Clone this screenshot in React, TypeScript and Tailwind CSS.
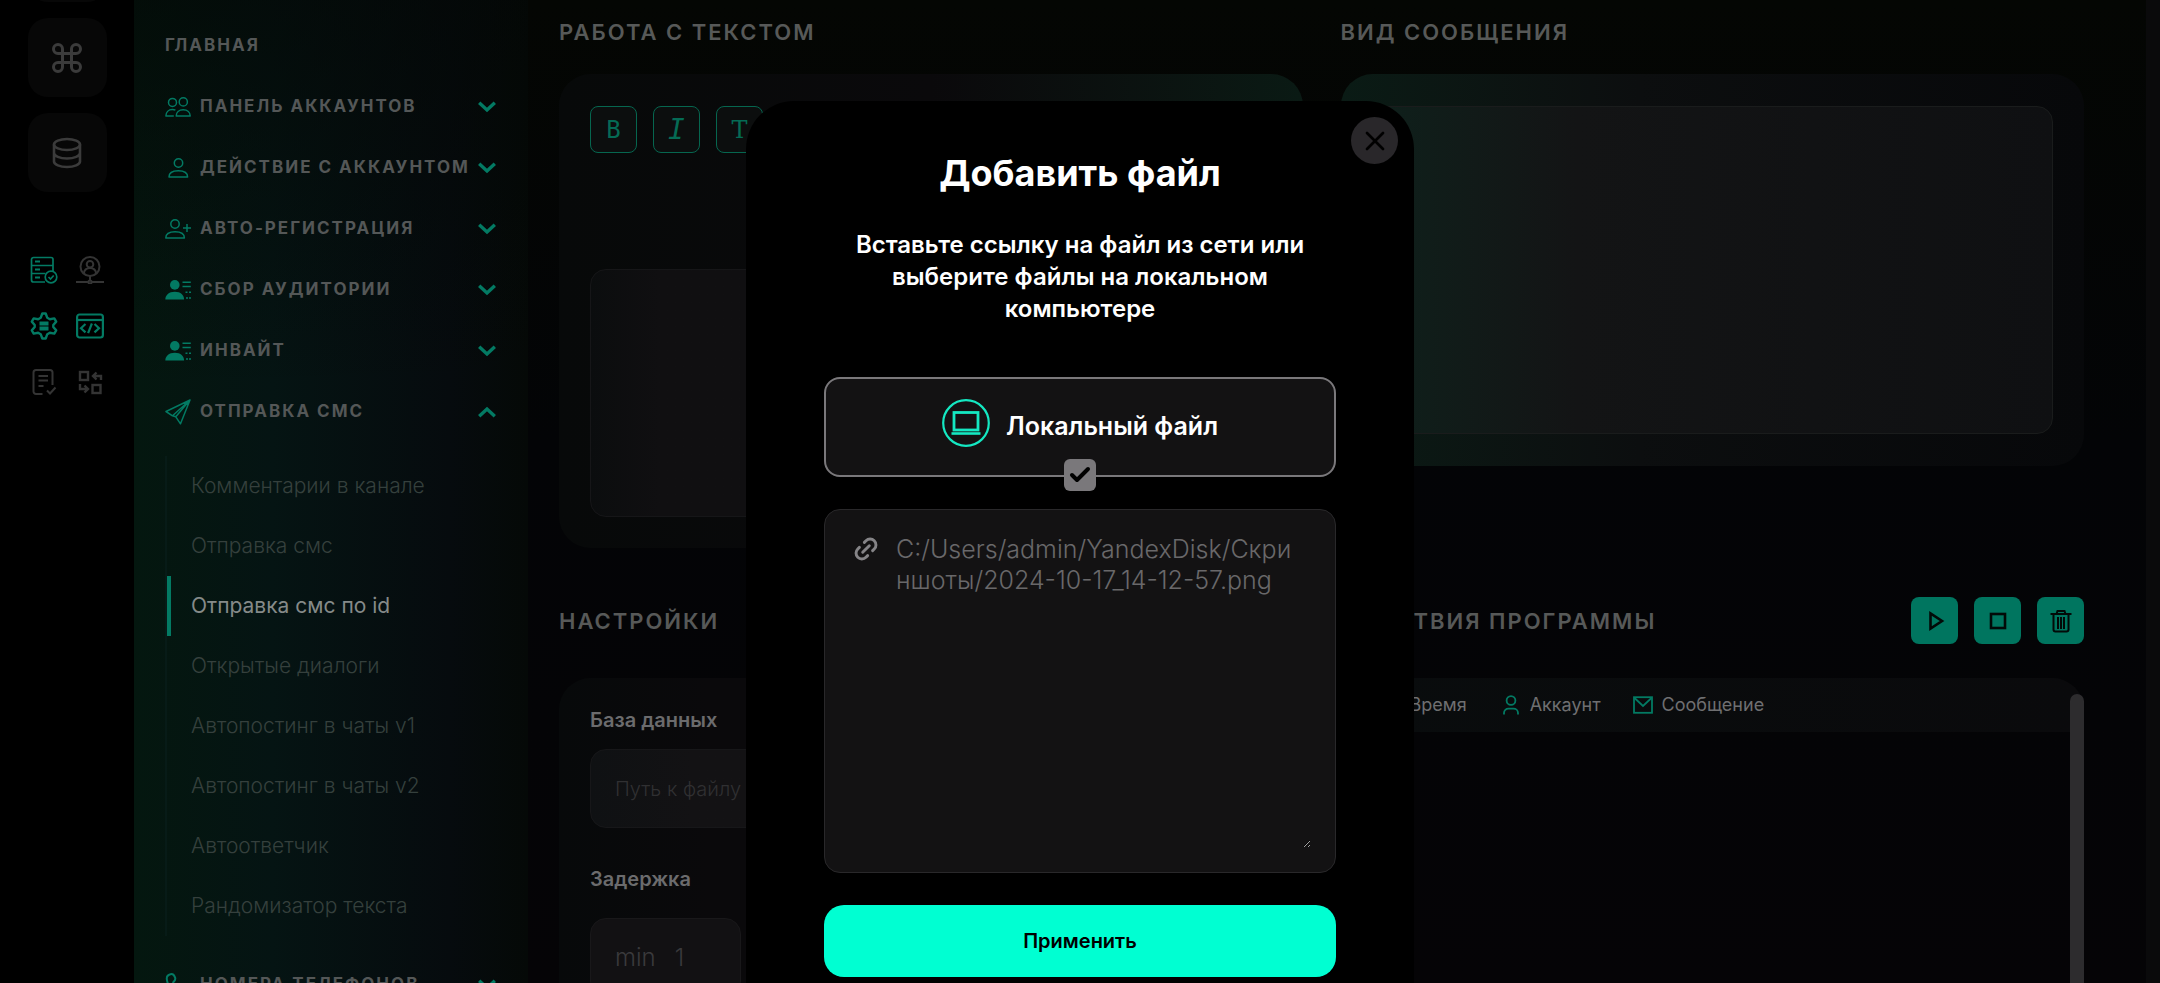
import React from 'react';
import { Command, Link2, X, Check } from 'lucide-react';

const TEAL = '#037a63';

interface IconProps {
  className?: string;
}

/* ---------- icons ---------- */

function UsersIcon({ className }: IconProps) {
  return (
    <svg viewBox="0 0 26 20" className={className} fill="none" stroke="currentColor" strokeWidth="1.5" strokeLinejoin="round">
      <circle cx="7.5" cy="5.4" r="4" />
      <circle cx="18.300" cy="4.900" r="4.100" />
      <path d="M8.800 19H.9c0-3.600 2.500-6.400 6.500-6.400 1.200 0 2.200.2 3 .6M11.200 19c0-3.700 2.800-6.300 7-6.300s7 2.600 7 6.300z" />
    </svg>
  );
}

function UserIcon({ className }: IconProps) {
  return (
    <svg viewBox="0 0 26 20" className={className} fill="none" stroke="currentColor" strokeWidth="1.5" strokeLinejoin="round">
      <circle cx="13.500" cy="5" r="4.200" />
      <path d="M4 19c0-3.700 3.300-6.300 9.300-6.300s9.300 2.600 9.300 6.300z" />
    </svg>
  );
}

function UserPlusIcon({ className }: IconProps) {
  return (
    <svg viewBox="0 0 26 20" className={className} fill="none" stroke="currentColor" strokeWidth="1.5" strokeLinejoin="round">
      <circle cx="10" cy="5" r="4.200" />
      <path d="M.8 19c0-3.700 3.300-6.300 9.300-6.300S19.400 15.300 19.400 19zM18 9h8M22 5v8" />
    </svg>
  );
}

function UserListIcon({ className }: IconProps) {
  return (
    <svg viewBox="0 0 26 20" className={className}>
      <circle cx="9.800" cy="4.900" r="4.800" fill="currentColor" />
      <path d="M.3 19.600c0-4.300 3.500-7.800 9.500-7.800s9.300 3.500 9.300 7.800z" fill="currentColor" />
      <path d="M17.500 2.200h8.300M17.500 6.500h8.300M20.500 12.300h2M24 12.300h2M21 18h2M24 18h2" stroke="currentColor" strokeWidth="1.400" />
    </svg>
  );
}

function PlaneIcon({ className }: IconProps) {
  return (
    <svg viewBox="0 0 26 26" className={className} fill="none" stroke="currentColor" strokeWidth="1.500" strokeLinejoin="round">
      <path d="M25 1 1 12.500l6.500 4.300zM25 1 10.800 17.800l4.700 7zM7.500 16.800l3.300 1" />
    </svg>
  );
}

function PhoneIcon({ className }: IconProps) {
  return (
    <svg viewBox="0 0 26 24" className={className} fill="none" stroke="currentColor" strokeWidth="2" strokeLinejoin="round">
      <path d="M5.500 1.200c2.300-.6 3.800 1 4.600 3.400.5 1.700.2 2.800-1.300 4-.8.7-.9 1.400-.4 2.400 1.300 2.600 3 4.400 5.400 5.800 1 .6 1.700.5 2.500-.3 1.100-1.200 2.300-1.500 3.900-.8 3 1.300 3.900 3 2.300 5.300-1.800 2.400-5 2.400-8.500.8C7.500 18.800 2.400 12.500 1.800 6c-.2-2.300 1.200-4.200 3.700-4.800z" />
    </svg>
  );
}

function Chevron({ up }: { up?: boolean }) {
  return (
    <svg viewBox="0 0 18 12" className={up ? 'w-[18px] shrink-0 rotate-180' : 'w-[18px] shrink-0'} fill="none" stroke={TEAL} strokeWidth="3.400">
      <path d="M1.200 1.800 9 9l7.800-7.200" />
    </svg>
  );
}

function DatabaseIcon() {
  return (
    <svg viewBox="0 0 30 32" className="h-8 w-[30px]" fill="none" stroke="currentColor" strokeWidth="2.600">
      <ellipse cx="15" cy="7.500" rx="13" ry="5.500" />
      <path d="M2 7.500v17c0 3 5.800 5.500 13 5.500s13-2.500 13-5.500v-17M2 16c0 3 5.800 5.500 13 5.500s13-2.500 13-5.500" />
    </svg>
  );
}

function ServerCheckIcon() {
  return (
    <svg viewBox="0 0 28 28" className="size-7" fill="none" stroke="currentColor" strokeWidth="1.700">
      <path d="M15 26H3.500A2 2 0 0 1 1.500 24V3.500a2 2 0 0 1 2-2H21a2 2 0 0 1 2 2V15M1.500 9.500H23M1.500 17.500h14" />
      <path d="M5 5.500h5M5 13.500h5M5 21.500h5" strokeWidth="2" />
      <circle cx="21" cy="21" r="5.800" />
      <path d="m18.500 21 2 2 3.200-3.500" />
    </svg>
  );
}

function UserNetworkIcon() {
  return (
    <svg viewBox="0 0 28 28" className="size-7" fill="none" stroke="currentColor" strokeWidth="2">
      <circle cx="14" cy="10.500" r="9.500" />
      <circle cx="14" cy="8.200" r="3.300" />
      <path d="M7.800 17.500c.5-3.500 2.700-5.500 6.200-5.500s5.700 2 6.200 5.500M14 20v4M0 26h12M16 26h12" />
      <circle cx="14" cy="26" r="1.600" />
    </svg>
  );
}

function GearIcon() {
  return (
    <svg viewBox="0 0 28 28" className="size-7" fill="none" stroke="currentColor" strokeWidth="2.400" strokeLinejoin="round">
      <path d="M12.300 1.500h3.400l1.600 4.300 2.500 1.400 4.500-.8 1.900 3.200-2.900 3.400v2l2.900 3.400-1.900 3.200-4.500-.8-2.500 1.400-1.600 4.300h-3.400l-1.600-4.300-2.500-1.400-4.500.8-1.900-3.200L4.700 15v-2L1.800 9.600l1.900-3.200 4.500.8 2.500-1.400z" />
      <path d="M9.500 11.500h9M9.500 16.500h9" strokeWidth="3.800" />
    </svg>
  );
}

function CodeWindowIcon() {
  return (
    <svg viewBox="0 0 28 28" className="size-7" fill="none" stroke="currentColor" strokeWidth="2.200">
      <rect x="1.100" y="2.500" width="25.800" height="23" rx="2.500" />
      <path d="M1 8h26" />
      <path d="m9.500 12-4.500 4.200 4.500 4.200M18.500 12l4.500 4.200-4.500 4.200M15.900 11.500l-3.800 9.600" />
    </svg>
  );
}

function DocCheckIcon() {
  return (
    <svg viewBox="0 0 28 28" className="size-7" fill="none" stroke="currentColor" strokeWidth="2">
      <path d="M12.500 26H6a2.500 2.500 0 0 1-2.500-2.500v-19A2.500 2.500 0 0 1 6 2h14a2.500 2.500 0 0 1 2.500 2.500V17" />
      <path d="M8.500 8h9.500M8.500 12.500h9.500M8.500 18h5M17 22.500l3 3 5.500-6" />
    </svg>
  );
}

function SwapIcon() {
  return (
    <svg viewBox="0 0 28 28" className="size-7" fill="none" stroke="currentColor" strokeWidth="2.400">
      <rect x="4" y="4" width="8" height="8" />
      <rect x="16.500" y="17" width="8" height="8" />
      <path d="M25 12V8h-7M20.500 4.500 17 8l3.500 3.500M4 16v5h7M8.500 17.500 12 21l-3.500 3.500" />
    </svg>
  );
}

function LaptopIcon() {
  return (
    <svg viewBox="0 0 48 48" className="size-12" fill="none" stroke="#14e8c2" strokeWidth="2.200">
      <circle cx="24" cy="24" r="22.800" />
      <rect x="12" y="13.500" width="24" height="17.500" strokeWidth="2.800" />
      <path d="M9.500 34.500h29" strokeWidth="2.600" />
    </svg>
  );
}

function PersonOutline() {
  return (
    <svg viewBox="0 0 16 20" className="h-5 w-4" fill="none" stroke={TEAL} strokeWidth="1.800">
      <circle cx="8" cy="5.500" r="4.400" />
      <path d="M1 19.500v-1.500c0-2.500 2-4.300 4.500-4.300h5c2.500 0 4.500 1.800 4.500 4.300v1.500" />
    </svg>
  );
}

function MailIcon() {
  return (
    <svg viewBox="0 0 20 18" className="h-[18px] w-5" fill="none" stroke={TEAL} strokeWidth="1.800">
      <rect x="1" y="1.200" width="18" height="15.600" />
      <path d="m1.500 2 8.500 8 8.500-8" />
    </svg>
  );
}

function ClockIcon() {
  return (
    <svg viewBox="0 0 20 20" className="size-5" fill="none" stroke={TEAL} strokeWidth="1.800">
      <circle cx="10" cy="10" r="8.500" />
      <path d="M10 5v5.500h4" />
    </svg>
  );
}

/* ---------- left rail ---------- */

function Rail() {
  return (
    <aside className="flex w-[134px] shrink-0 flex-col items-center bg-black">
      <div className="-mt-[77px] flex flex-col gap-4 text-[#3b3b3b]">
        <button type="button" aria-label="Аккаунты" className="size-[79px] rounded-[20px] bg-[#070707]" />
        <button type="button" aria-label="Команды" className="flex size-[79px] items-center justify-center rounded-[20px] bg-[#070707]">
          <Command className="size-9" strokeWidth={2} />
        </button>
        <button type="button" aria-label="Базы данных" className="flex size-[79px] items-center justify-center rounded-[20px] bg-[#070707]">
          <DatabaseIcon />
        </button>
      </div>
      <div className="mt-16 grid grid-cols-2 gap-x-[18px] gap-y-7 text-[#343434]">
        <span className="text-[#037a63]"><ServerCheckIcon /></span>
        <UserNetworkIcon />
        <span className="text-[#037a63]"><GearIcon /></span>
        <span className="text-[#037a63]"><CodeWindowIcon /></span>
        <DocCheckIcon />
        <SwapIcon />
      </div>
    </aside>
  );
}

/* ---------- sidebar ---------- */

interface NavRowProps {
  icon: React.ReactNode;
  label: string;
  open?: boolean;
}

function NavRow({ icon, label, open }: NavRowProps) {
  return (
    <button type="button" aria-expanded={!!open} className="flex h-[61px] w-full shrink-0 items-center text-left">
      <span className="flex w-[35px] shrink-0 text-[#037a63]">{icon}</span>
      <span className="flex-1 text-[17px] font-bold tracking-[2px] whitespace-nowrap text-[#545757] uppercase">{label}</span>
      <Chevron up={open} />
    </button>
  );
}

const submenu = [
  'Комментарии в канале',
  'Отправка смс',
  'Отправка смс по id',
  'Открытые диалоги',
  'Автопостинг в чаты v1',
  'Автопостинг в чаты v2',
  'Автоответчик',
  'Рандомизатор текста',
];

function Sidebar() {
  return (
    <nav className="flex w-[394px] shrink-0 flex-col overflow-hidden bg-[linear-gradient(to_bottom,#030705a0,transparent_40%),linear-gradient(to_right,#04170f,#051413_35%,#060b0e_80%,#050907)] pt-4 pr-8 pl-[31px]">
      <h2 className="flex h-[60px] shrink-0 items-center text-[17px] font-bold tracking-[2px] text-[#545757] uppercase">Главная</h2>
      <NavRow icon={<UsersIcon className="w-[26px]" />} label="Панель аккаунтов" />
      <NavRow icon={<UserIcon className="w-[26px]" />} label="Действие с аккаунтом" />
      <NavRow icon={<UserPlusIcon className="w-[26px]" />} label="Авто-регистрация" />
      <NavRow icon={<UserListIcon className="w-[26px]" />} label="Сбор аудитории" />
      <NavRow icon={<UserListIcon className="w-[26px]" />} label="Инвайт" />
      <NavRow icon={<PlaneIcon className="w-[26px]" />} label="Отправка смс" open />
      <ul className="mt-[14px] mb-[18px] border-l-2 border-[#071b17]">
        {submenu.map((item, i) => (
          <li key={item}>
            <a
              href="#"
              className={
                i === 2
                  ? 'flex h-[60px] items-center border-l-4 border-[#037a63] pl-5 text-[21px] text-[#858a89]'
                  : 'flex h-[60px] items-center border-l-4 border-transparent pl-5 text-[21px] font-light text-[#35403d]'
              }
            >
              {item}
            </a>
          </li>
        ))}
      </ul>
      <NavRow icon={<PhoneIcon className="w-[26px]" />} label="Номера телефонов" />
    </nav>
  );
}

/* ---------- content ---------- */

function SectionTitle({ children }: { children: React.ReactNode }) {
  return <h2 className="text-[22px] leading-7 font-semibold tracking-[2px] whitespace-nowrap text-[#575958] uppercase">{children}</h2>;
}

function Workspace() {
  return (
    <main className="grid min-w-0 flex-1 grid-cols-2 content-start gap-x-[38px] overflow-hidden bg-linear-to-b from-[#040603] via-[#030406] via-45% to-[#050406] pr-[62px] pl-[31px]">
      <section className="flex flex-col">
        <div className="flex h-[74px] items-start pt-[18px]">
          <SectionTitle>Работа с текстом</SectionTitle>
        </div>
        <div className="h-[474px] rounded-[32px] bg-linear-to-r from-[#070909] via-[#0a090b] via-50% to-[#0a1a14] p-8 pl-[31px]">
          <div className="flex gap-4 text-[#056b55]">
            <button type="button" className="size-[47px] rounded-lg border border-[#06664f] bg-[#0c0e0e] font-['DejaVu_Sans_Mono',monospace] text-2xl">B</button>
            <button type="button" className="size-[47px] rounded-lg border border-[#06664f] bg-[#0c0e0e] font-['DejaVu_Sans_Mono',monospace] text-[28px] leading-8 italic">I</button>
            <button type="button" className="size-[47px] rounded-lg border border-[#06664f] bg-[#0c0e0e] font-['DejaVu_Serif',serif] text-2xl">T</button>
          </div>
          <textarea aria-label="Текст сообщения" className="mt-[116px] block h-[248px] w-full resize-none rounded-2xl border border-[#161618] bg-linear-to-r from-[#0b0d0e] via-[#100f11] via-10% to-[#100f11]" />
        </div>
      </section>

      <section className="flex flex-col">
        <div className="flex h-[74px] items-start pt-[18px]">
          <SectionTitle>Вид сообщения</SectionTitle>
        </div>
        <div className="h-[392px] rounded-[32px] bg-linear-to-r from-[#0a1b15] via-[#0c0e0f] via-40% to-[#07080a] p-8 pr-[31px]">
          <div className="h-full rounded-2xl border border-[#1a1c1c] bg-linear-to-r from-[#0e201b] via-[#131415] via-30% to-[#0f1012]" />
        </div>
      </section>

      <section className="flex flex-col pt-[49px]">
        <div className="flex h-[47px] items-center">
          <SectionTitle>Настройки</SectionTitle>
        </div>
        <form className="mt-[34px] h-[340px] rounded-t-[32px] bg-linear-to-r from-[#07090a] via-[#0a090b] via-20% to-[#0a090b] px-[31px] pt-7">
          <label htmlFor="db" className="block text-xl font-semibold text-[#6b6b6d]">База данных</label>
          <input
            id="db"
            type="text"
            placeholder="Путь к файлу с базой"
            className="mt-[15px] h-[79px] w-full rounded-2xl border border-[#171719] bg-linear-to-r from-[#0f1113] via-[#131214] via-15% to-[#131214] px-6 text-xl font-light placeholder:text-[#303032]"
          />
          <label htmlFor="delay" className="mt-[37px] block text-xl font-semibold text-[#6b6b6d]">Задержка</label>
          <div className="mt-[25px] flex h-[79px] w-[151px] items-center gap-[19px] rounded-2xl border border-[#19181a] bg-[#121113] px-6 text-2xl font-light text-[#3a3a3c]">
            <span>min</span>
            <input id="delay" type="text" defaultValue="1" className="w-8 bg-transparent" />
          </div>
        </form>
      </section>

      <section className="flex flex-col pt-[49px]">
        <div className="flex h-[47px] items-center justify-between">
          <SectionTitle>Действия программы</SectionTitle>
          <div className="flex gap-4">
            <button type="button" aria-label="Запустить" className="flex size-[47px] items-center justify-center rounded-lg bg-[#00755f]">
              <svg viewBox="0 0 24 24" className="size-6" fill="none" stroke="#020a08" strokeWidth="2.600">
                <path d="M7.500 4.500v15L19 12z" />
              </svg>
            </button>
            <button type="button" aria-label="Остановить" className="flex size-[47px] items-center justify-center rounded-lg bg-[#00755f]">
              <svg viewBox="0 0 24 24" className="size-6" fill="none" stroke="#020a08" strokeWidth="2.600">
                <rect x="5" y="5" width="14" height="14" />
              </svg>
            </button>
            <button type="button" aria-label="Очистить" className="flex size-[47px] items-center justify-center rounded-lg bg-[#00755f]">
              <svg viewBox="0 0 24 24" className="size-6" fill="none" stroke="#020a08" strokeWidth="2">
                <path d="M1.500 5h21M7.500 5l1-3h7l1 3M4.500 5v15.500a2 2 0 0 0 2 2h11a2 2 0 0 0 2-2V5M9 8v12M12 8v12M15 8v12" />
              </svg>
            </button>
          </div>
        </div>
        <div className="relative mt-[34px] h-[330px]">
          <table className="w-full text-left text-lg text-[#6f6f71]">
            <thead>
              <tr className="block h-[54px] rounded-t-[32px] bg-linear-to-r from-[#090c0d] to-[#0a0a0c] pl-[38px]">
                <th className="inline-flex h-[54px] items-center gap-[11px] pr-9 font-normal"><ClockIcon />Время</th>
                <th className="inline-flex h-[54px] items-center gap-[11px] pr-8 font-normal"><PersonOutline />Аккаунт</th>
                <th className="inline-flex h-[54px] items-center gap-[9px] font-normal"><MailIcon />Сообщение</th>
              </tr>
            </thead>
          </table>
          <div className="absolute top-4 right-0 bottom-0 w-[14px] rounded-t-full bg-[#2d2c2e]" />
        </div>
      </section>
    </main>
  );
}

/* ---------- dialog ---------- */

function AddFileDialog() {
  return (
    <div className="absolute inset-0 flex justify-center overflow-hidden pt-[101px]">
      <div role="dialog" aria-modal="true" aria-labelledby="dialog-title" className="relative flex h-[960px] w-[668px] flex-col items-center rounded-[48px] bg-black px-[78px] pt-12">
        <button type="button" aria-label="Закрыть" className="absolute top-4 right-4 flex size-[47px] items-center justify-center rounded-full bg-[#29272a]">
          <X className="size-8 text-black" strokeWidth={2} />
        </button>
        <h1 id="dialog-title" className="text-4xl leading-[48px] font-bold text-white">Добавить файл</h1>
        <p className="mt-8 max-w-[480px] text-center text-2xl leading-8 font-semibold text-white">
          Вставьте ссылку на файл из сети или выберите файлы на локальном компьютере
        </p>
        <label className="relative mt-[52px] flex h-[100px] w-full shrink-0 items-center justify-center gap-4 rounded-2xl border-2 border-[#7a787b] bg-[#131213] pb-2">
          <LaptopIcon />
          <span className="pt-2 text-[25px] font-semibold text-white">Локальный файл</span>
          <input type="checkbox" defaultChecked className="absolute -bottom-4 size-8 appearance-none rounded-md bg-[#7a787b]" />
          <Check className="pointer-events-none absolute -bottom-3 size-6 text-black" strokeWidth={4} />
        </label>
        <div className="mt-8 flex h-[364px] w-full shrink-0 gap-4 rounded-2xl border border-[#29282a] bg-[#131213] py-6 pr-6 pl-[27px]">
          <Link2 className="mt-px size-7 shrink-0 -rotate-45 text-[#858487]" strokeWidth={2.5} />
          <textarea
            aria-label="Ссылка на файл"
            defaultValue="C:/Users/admin/YandexDisk/Скриншоты/2024-10-17_14-12-57.png"
            className="h-full min-w-0 flex-1 resize overflow-hidden bg-transparent pr-3 text-[25px] leading-[31px] font-light break-all text-[#69686a]"
          />
        </div>
        <button type="button" className="mt-8 h-[72px] w-full shrink-0 rounded-[20px] bg-[#00ffd2] text-xl font-semibold text-black">
          Применить
        </button>
      </div>
    </div>
  );
}

export default function App() {
  return (
    <div className="relative flex h-screen overflow-hidden bg-black font-['Inter','Noto_Sans',sans-serif]">
      <Rail />
      <Sidebar />
      <Workspace />
      <div className="w-[14px] shrink-0 bg-[#0a0a0b]" />
      <AddFileDialog />
    </div>
  );
}
